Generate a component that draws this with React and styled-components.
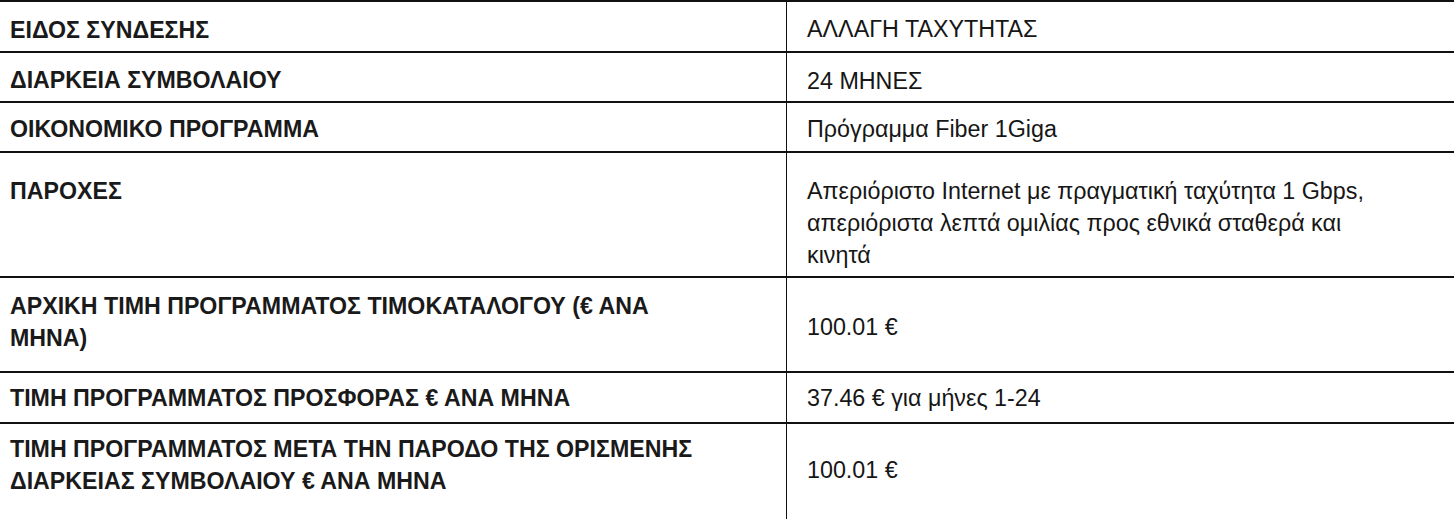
import React from 'react'
import styled, {createGlobalStyle} from 'styled-components';

const GlobalStyle = createGlobalStyle`
  html, body {
    margin: 0;
    padding: 0;
    background: #fff;
  }
  body {
    font-family: "Liberation Sans", Arial, sans-serif;
    color: #111;
  }
`;

const Table = styled.div`
  width: 1454px;
  height: 521px;
  overflow: hidden;
  background: #fff;
`;

const Row = styled.div`
  display: grid;
  grid-template-columns: 786px 1fr;
  height: ${p => p.$h}px;
  border-top: 2px solid #111;
  box-sizing: border-box;
`;

const Label = styled.div`
  padding: ${p => p.$pt}px 61px 0 10px;
  font-size: 23.2px;
  line-height: 32px;
  font-weight: 700;
  color: #1a1a1a;
`;

const Value = styled.div`
  border-left: 1px solid #111;
  padding: ${p => p.$pt}px 70px 0 20px;
  font-size: 23.3px;
  line-height: 32px;
  color: #161616;
`;

const rows = [
  {label: 'ΕΙΔΟΣ ΣΥΝΔΕΣΗΣ', value: 'ΑΛΛΑΓΗ ΤΑΧΥΤΗΤΑΣ', h: 51, lp: 12, vp: 11},
  {label: 'ΔΙΑΡΚΕΙΑ ΣΥΜΒΟΛΑΙΟΥ', value: '24 ΜΗΝΕΣ', h: 50, lp: 11, vp: 12},
  {label: 'ΟΙΚΟΝΟΜΙΚΟ ΠΡΟΓΡΑΜΜΑ', value: 'Πρόγραμμα Fiber 1Giga', h: 50, lp: 10, vp: 10},
  {
    label: 'ΠΑΡΟΧΕΣ',
    value: 'Απεριόριστο Internet με πραγματική ταχύτητα 1 Gbps, απεριόριστα λεπτά ομιλίας προς εθνικά σταθερά και κινητά',
    h: 125, lp: 22, vp: 22,
  },
  {label: 'ΑΡΧΙΚΗ ΤΙΜΗ ΠΡΟΓΡΑΜΜΑΤΟΣ ΤΙΜΟΚΑΤΑΛΟΓΟΥ (€ ΑΝΑ ΜΗΝΑ)', value: '100.01 €', h: 95, lp: 12, vp: 33},
  {label: 'ΤΙΜΗ ΠΡΟΓΡΑΜΜΑΤΟΣ ΠΡΟΣΦΟΡΑΣ € ΑΝΑ ΜΗΝΑ', value: '37.46 € για μήνες 1-24', h: 51, lp: 9, vp: 9},
  {label: 'ΤΙΜΗ ΠΡΟΓΡΑΜΜΑΤΟΣ ΜΕΤΑ ΤΗΝ ΠΑΡΟΔΟ ΤΗΣ ΟΡΙΣΜΕΝΗΣ ΔΙΑΡΚΕΙΑΣ ΣΥΜΒΟΛΑΙΟΥ € ΑΝΑ ΜΗΝΑ', value: '100.01 €', h: 97, lp: 9, vp: 30},
];

const App = () => {
  return (
    <>
      <GlobalStyle />
      <Table>
        {rows.map((r, i) => (
          <Row key={i} $h={r.h}>
            <Label $pt={r.lp}>{r.label}</Label>
            <Value $pt={r.vp}>{r.value}</Value>
          </Row>
        ))}
      </Table>
    </>
  );
};

export default App;
